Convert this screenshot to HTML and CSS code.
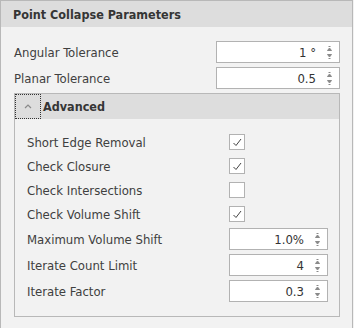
FILE: index.html
```html
<!DOCTYPE html>
<html lang="en">
<head>
	<meta charset="UTF-8">
	<title>Point Collapse Parameters</title>
	<link rel="stylesheet" href="styles.css">
</head>
<body>

	<div class="panel">
		<div class="panel-title">Point Collapse Parameters</div>
		<div class="panel-body">
			<div class="row">
				<span class="label">Angular Tolerance</span>
				<div class="spin wide">
					<span class="value">1 °</span>
					<svg class="arrows" width="7" height="13" viewBox="0 0 7 13"><path d="M2.5 0.5h2M1.5 4.5h4L3.5 2z M1.5 8.5h4L3.5 11z M2.5 12.5h2" fill="#8a8a8a" stroke="#8a8a8a" stroke-width="1"/></svg>
				</div>
			</div>
			<div class="row">
				<span class="label">Planar Tolerance</span>
				<div class="spin wide">
					<span class="value">0.5</span>
					<svg class="arrows" width="7" height="13" viewBox="0 0 7 13"><path d="M2.5 0.5h2M1.5 4.5h4L3.5 2z M1.5 8.5h4L3.5 11z M2.5 12.5h2" fill="#8a8a8a" stroke="#8a8a8a" stroke-width="1"/></svg>
				</div>
			</div>

			<div class="group">
				<div class="group-head">
					<span class="toggle">
						<svg width="8" height="5" viewBox="0 0 8 5"><path d="M1 4L4 1L7 4" fill="none" stroke="#8a8a8a" stroke-width="1.2"/></svg>
					</span>
					<span class="group-title">Advanced</span>
				</div>
				<div class="group-body">
					<div class="crow">
						<span class="label">Short Edge Removal</span>
						<span class="check"><svg width="14" height="14" viewBox="0 0 14 14"><path d="M3.5 8L6 10.5L11 4" fill="none" stroke="#444" stroke-width="1"/></svg></span>
					</div>
					<div class="crow">
						<span class="label">Check Closure</span>
						<span class="check"><svg width="14" height="14" viewBox="0 0 14 14"><path d="M3.5 8L6 10.5L11 4" fill="none" stroke="#444" stroke-width="1"/></svg></span>
					</div>
					<div class="crow">
						<span class="label">Check Intersections</span>
						<span class="check"></span>
					</div>
					<div class="crow">
						<span class="label">Check Volume Shift</span>
						<span class="check"><svg width="14" height="14" viewBox="0 0 14 14"><path d="M3.5 8L6 10.5L11 4" fill="none" stroke="#444" stroke-width="1"/></svg></span>
					</div>
					<div class="row">
						<span class="label">Maximum Volume Shift</span>
						<div class="spin">
							<span class="value">1.0%</span>
							<svg class="arrows" width="7" height="13" viewBox="0 0 7 13"><path d="M2.5 0.5h2M1.5 4.5h4L3.5 2z M1.5 8.5h4L3.5 11z M2.5 12.5h2" fill="#8a8a8a" stroke="#8a8a8a" stroke-width="1"/></svg>
						</div>
					</div>
					<div class="row">
						<span class="label">Iterate Count Limit</span>
						<div class="spin">
							<span class="value">4</span>
							<svg class="arrows" width="7" height="13" viewBox="0 0 7 13"><path d="M2.5 0.5h2M1.5 4.5h4L3.5 2z M1.5 8.5h4L3.5 11z M2.5 12.5h2" fill="#8a8a8a" stroke="#8a8a8a" stroke-width="1"/></svg>
						</div>
					</div>
					<div class="row">
						<span class="label">Iterate Factor</span>
						<div class="spin">
							<span class="value">0.3</span>
							<svg class="arrows" width="7" height="13" viewBox="0 0 7 13"><path d="M2.5 0.5h2M1.5 4.5h4L3.5 2z M1.5 8.5h4L3.5 11z M2.5 12.5h2" fill="#8a8a8a" stroke="#8a8a8a" stroke-width="1"/></svg>
						</div>
					</div>
				</div>
			</div>
		</div>
	</div>

</body>
</html>
```
FILE: styles.css
```css
body{
	margin: 0;
	font: 13px/1.2 "DejaVu Sans Condensed", "DejaVu Sans", sans-serif;
	color: #404040;
	background: #f2f2f2;
}
.panel{
	width: 351px;
	height: 340px;
	border: 1px solid #b8b8b8;
	border-bottom: none;
	background: #f2f2f2;
}
.panel-title{
	height: 26px;
	line-height: 27px;
	padding-left: 12px;
	background: #dddddd;
	font-size: 12.5px;
	font-weight: bold;
	color: #353535;
}
.panel-body{
	padding: 12px 12px 0 13px;
}
/* a label with a spin editor */
.row{
	display: flex;
	align-items: center;
	height: 26px;
}
.label{
	flex: 1;
	padding-top: 1px;
}
.spin{
	display: flex;
	align-items: center;
	justify-content: flex-end;
	box-sizing: border-box;
	width: 99px;
	height: 22px;
	padding-right: 6px;
	border: 1px solid #b2b2b2;
	background: #fff;
	color: #333;
}
.spin.wide{
	width: 124px;
}
.value{
	margin-right: 10px;
	padding-top: 1px;
}
.arrows{
	display: block;
}
/* the Advanced group */
.group{
	margin-top: 2px;
	width: 324px;
	border: 1px solid #b8b8b8;
}
.group-head{
	display: flex;
	align-items: center;
	height: 25px;
	background: #dddddd;
}
.toggle{
	display: flex;
	align-items: center;
	justify-content: center;
	box-sizing: border-box;
	width: 26px;
	height: 25px;
	border: 1px dotted #333;
}
.group-title{
	margin-left: 2px;
	font-size: 12.5px;
	font-weight: bold;
	color: #353535;
}
.group-body{
	padding: 11px 11px 12px 12px;
}
.crow{
	display: flex;
	align-items: center;
	height: 24px;
}
.check{
	display: flex;
	align-items: center;
	justify-content: center;
	box-sizing: border-box;
	width: 16px;
	height: 16px;
	margin-right: 83px;
	border: 1px solid #b2b2b2;
	background: #fff;
}
```
